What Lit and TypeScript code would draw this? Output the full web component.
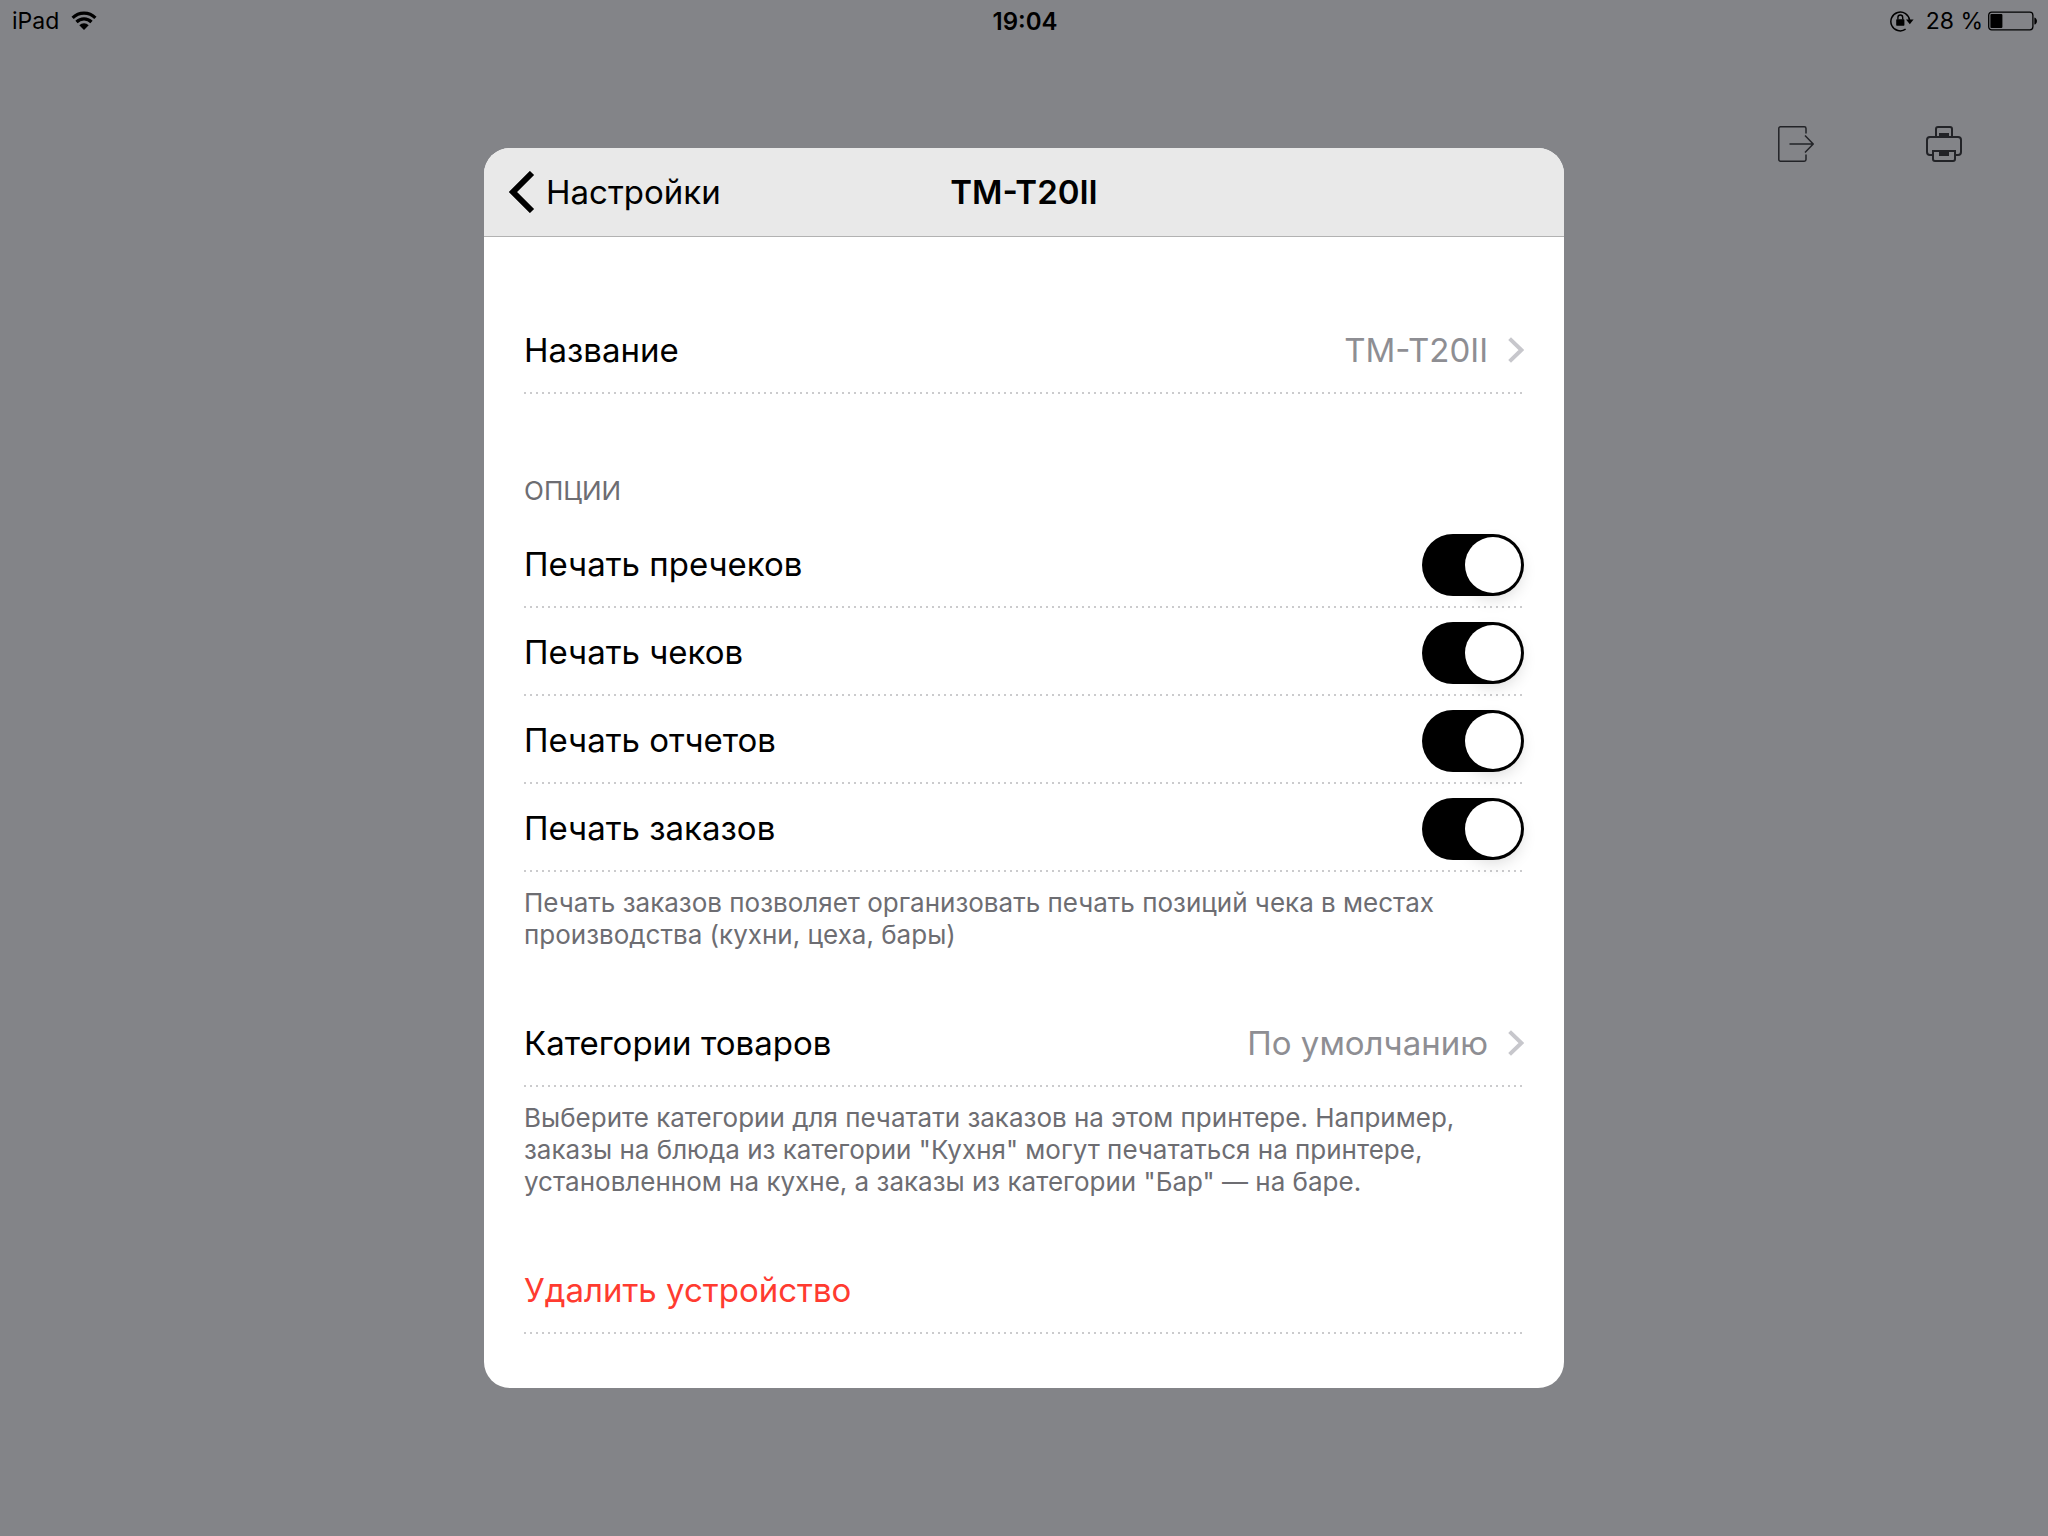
import { LitElement, html, css } from "lit";
import { customElement, property, state } from "lit/decorators.js";

const chevron = html`<svg class="chevron" width="16" height="26" viewBox="0 0 16 26" aria-hidden="true">
  <path d="M1.6 1.6 13.4 13 1.6 24.4" fill="none" stroke="#c7c7cc" stroke-width="4" />
</svg>`;

@customElement("toggle-row")
export class ToggleRow extends LitElement {
  @property() label = "";
  @property({ type: Boolean }) checked = false;

  static styles = css`
    :host {
      display: block;
    }
    .row {
      display: flex;
      align-items: center;
      justify-content: space-between;
      height: 88px;
      background: repeating-linear-gradient(90deg, #cbcbcd 0 2px, transparent 2px 6px) left bottom / 100% 2px
        no-repeat;
    }
    .switch {
      appearance: none;
      display: block;
      flex: none;
      box-sizing: border-box;
      width: 102px;
      height: 62px;
      margin: 2px 0 0;
      padding: 3px;
      border-radius: 31px;
      background: #e5e5ea;
      cursor: pointer;
    }
    .switch::before {
      content: "";
      display: block;
      width: 56px;
      height: 56px;
      border-radius: 50%;
      background: #fff;
      box-shadow: 0 6px 16px rgba(0, 0, 0, 0.15);
    }
    .switch:checked {
      background: #000;
    }
    .switch:checked::before {
      margin-left: auto;
    }
  `;

  private onChange(e: Event) {
    this.checked = (e.target as HTMLInputElement).checked;
  }

  render() {
    return html`<label class="row">
      <span>${this.label}</span>
      <input class="switch" type="checkbox" role="switch" .checked=${this.checked} @change=${this.onChange} />
    </label>`;
  }
}

@customElement("app-root")
export class AppRoot extends LitElement {
  @state() private options = ["Печать пречеков", "Печать чеков", "Печать отчетов", "Печать заказов"];

  static styles = css`
    :host {
      display: flex;
      flex-direction: column;
      position: relative;
      min-height: 100vh;
      background: #838488;
      color: #000;
      font-family: Inter, "Liberation Sans", sans-serif;
      font-size: 33px;
    }
    button {
      margin: 0;
      padding: 0;
      border: 0;
      background: none;
      color: inherit;
      font: inherit;
      text-align: left;
      cursor: pointer;
    }
    svg {
      display: block;
      flex: none;
    }
    .status {
      display: grid;
      grid-template-columns: 1fr auto 1fr;
      align-items: center;
      height: 42px;
      padding: 0 10px 0 12px;
      font-size: 23px;
    }
    .status-side {
      display: flex;
      align-items: center;
      gap: 12px;
    }
    .status-end {
      justify-content: flex-end;
    }
    .time {
      font-size: 24px;
      font-weight: 600;
    }
    .charge {
      display: flex;
      align-items: center;
      gap: 5px;
    }
    .tools {
      display: flex;
      justify-content: flex-end;
      gap: 112px;
      padding: 84px 86px 0 0;
    }
    .overlay {
      position: absolute;
      inset: 0;
      display: grid;
      place-items: center;
      pointer-events: none;
    }
    .dialog {
      width: min(1080px, 100%);
      border-radius: 26px;
      background: #fff;
      overflow: hidden;
      pointer-events: auto;
    }
    .header {
      display: grid;
      grid-template-columns: 1fr auto 1fr;
      align-items: center;
      height: 88px;
      padding: 0 24px;
      border-bottom: 1px solid #b2b2b2;
      background: #e9e9e9;
    }
    .back {
      display: flex;
      align-items: center;
      justify-self: start;
      gap: 10px;
    }
    .title {
      margin: 0;
      font-size: 33px;
      font-weight: 600;
    }
    .content {
      padding: 69px 40px 54px;
    }
    .line {
      display: flex;
      align-items: center;
      justify-content: space-between;
      width: 100%;
      height: 88px;
      background: repeating-linear-gradient(90deg, #cbcbcd 0 2px, transparent 2px 6px) left bottom / 100% 2px
        no-repeat;
    }
    .value {
      display: flex;
      align-items: center;
      gap: 20px;
      color: #8e8e93;
    }
    .caption {
      margin: 0;
      padding: 80px 0 12px;
      color: #6d6d72;
      font-size: 26px;
      font-weight: 400;
      line-height: 34px;
      text-transform: uppercase;
    }
    .note {
      margin: 0 0 48px;
      padding-top: 15px;
      color: #6d6d72;
      font-size: 26px;
      line-height: 32px;
    }
    .danger {
      color: #ff3b30;
    }
  `;

  render() {
    return html`
      <div class="status">
        <div class="status-side">
          <span>iPad</span>
          <svg width="26" height="20" viewBox="0 0 26 20" aria-hidden="true">
            <path d="M1.6 6.9a16.2 16.2 0 0 1 22.8 0" fill="none" stroke="#000" stroke-width="3.2" />
            <path d="M5.5 11a10.6 10.6 0 0 1 15 0" fill="none" stroke="#000" stroke-width="3.2" />
            <path d="M8.3 14.2a6.7 6.7 0 0 1 9.4 0L13 19Z" />
          </svg>
        </div>
        <span class="time">19:04</span>
        <div class="status-side status-end">
          <svg width="24" height="22" viewBox="0 0 24 22" aria-hidden="true">
            <path d="M15.600 19.200A9.400 9.400 0 1 1 19.600 10.400" fill="none" stroke="#000" stroke-width="1.5" />
            <path d="M16 9.600h7.600l-3.800 4.600Z" />
            <rect x="6.200" y="9.300" width="8.200" height="6.400" rx="0.6" />
            <path d="M7.900 9.600V7.400a2.400 2.400 0 0 1 4.800 0v2.200" fill="none" stroke="#000" stroke-width="1.4" />
          </svg>
          <div class="charge">
            <span>28 %</span>
            <svg width="50" height="20" viewBox="0 0 50 20" aria-hidden="true">
              <rect x="0.7" y="1.2" width="44.2" height="17.6" rx="3" fill="none" stroke="#000" stroke-width="1.3" />
              <rect x="2.4" y="2.9" width="12" height="14.2" rx="1" />
              <path d="M46.4 6.4c3.4 1 3.4 6.2 0 7.2Z" />
            </svg>
          </div>
        </div>
      </div>

      <div class="tools">
        <button aria-label="Выход">
          <svg width="36" height="36" viewBox="0 0 36 36" fill="none" stroke="#222327" stroke-width="1.5">
            <path d="M28 7.5V2.5a1.700 1.700 0 0 0-1.700-1.700H2.500A1.700 1.700 0 0 0 .8 2.500v31a1.700 1.700 0 0 0 1.700 1.700h23.800a1.700 1.700 0 0 0 1.700-1.700v-5" />
            <path d="M11.500 18H35M27 9.600 35.200 18 27 26.400" />
          </svg>
        </button>
        <button aria-label="Принтер">
          <svg width="36" height="36" viewBox="0 0 36 36" fill="none" stroke="#222327" stroke-width="2">
            <path d="M10 10V3a2 2 0 0 1 2-2h12a2 2 0 0 1 2 2v7" />
            <path d="M6.500 29H4a3 3 0 0 1-3-3V14a3 3 0 0 1 3-3h28a3 3 0 0 1 3 3v12a3 3 0 0 1-3 3h-2.500" />
            <path d="M7 25h22v8a2 2 0 0 1-2 2H9a2 2 0 0 1-2-2Z" />
            <path d="M13 7h10v4H13zM13 25h10v5H13z" fill="#222327" stroke="none" />
          </svg>
        </button>
      </div>

      <div class="overlay">
        <section class="dialog" role="dialog" aria-labelledby="title">
          <header class="header">
            <button class="back">
              <svg width="28" height="42" viewBox="0 0 28 42" aria-hidden="true">
                <path d="M24 2 5 21 24 40" fill="none" stroke="#000" stroke-width="6" />
              </svg>
              <span>Настройки</span>
            </button>
            <h1 class="title" id="title">TM-T20II</h1>
          </header>
          <div class="content">
            <button class="line">
              <span>Название</span>
              <span class="value">TM-T20II ${chevron}</span>
            </button>
            <h2 class="caption">Опции</h2>
            ${this.options.map((label) => html`<toggle-row .label=${label} .checked=${true}></toggle-row>`)}
            <p class="note">
              Печать заказов позволяет организовать печать позиций чека в местах производства (кухни, цеха, бары)
            </p>
            <button class="line">
              <span>Категории товаров</span>
              <span class="value">По умолчанию ${chevron}</span>
            </button>
            <p class="note">
              Выберите категории для печатати заказов на этом принтере. Например, заказы на блюда из категории
              "Кухня" могут печататься на принтере, установленном на кухне, а заказы из категории "Бар" — на баре.
            </p>
            <button class="line danger">Удалить устройство</button>
          </div>
        </section>
      </div>
    `;
  }
}
